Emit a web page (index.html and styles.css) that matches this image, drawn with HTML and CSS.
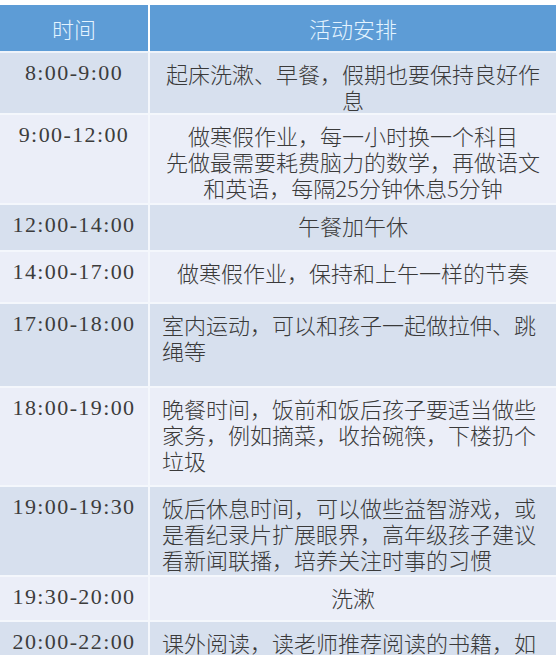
FILE: index.html
```html
<!DOCTYPE html>
<html lang="zh">
<head>
<meta charset="utf-8">
<title>寒假作息表</title>
<link rel="stylesheet" href="styles.css">
</head>
<body>
<table class="schedule">
  <colgroup><col class="col-time"><col class="col-act"></colgroup>
  <thead>
    <tr class="head"><th>时间</th><th>活动安排</th></tr>
  </thead>
  <tbody>
    <tr class="r1 dark"><td class="time">8:00-9:00</td><td class="act center">起床洗漱、早餐，假期也要保持良好作息</td></tr>
    <tr class="r2 light"><td class="time">9:00-12:00</td><td class="act center">做寒假作业，每一小时换一个科目<br>先做最需要耗费脑力的数学，再做语文和英语，每隔25分钟休息5分钟</td></tr>
    <tr class="r3 dark"><td class="time">12:00-14:00</td><td class="act center">午餐加午休</td></tr>
    <tr class="r4 light"><td class="time">14:00-17:00</td><td class="act center">做寒假作业，保持和上午一样的节奏</td></tr>
    <tr class="r5 dark"><td class="time">17:00-18:00</td><td class="act">室内运动，可以和孩子一起做拉伸、跳绳等</td></tr>
    <tr class="r6 light"><td class="time">18:00-19:00</td><td class="act">晚餐时间，饭前和饭后孩子要适当做些家务，例如摘菜，收拾碗筷，下楼扔个垃圾</td></tr>
    <tr class="r7 dark"><td class="time">19:00-19:30</td><td class="act">饭后休息时间，可以做些益智游戏，或是看纪录片扩展眼界，高年级孩子建议看新闻联播，培养关注时事的习惯</td></tr>
    <tr class="r8 light"><td class="time">19:30-20:00</td><td class="act center">洗漱</td></tr>
    <tr class="r9 dark"><td class="time">20:00-22:00</td><td class="act">课外阅读，读老师推荐阅读的书籍，如</td></tr>
  </tbody>
</table>
</body>
</html>
```
FILE: styles.css
```css
html, body {
  margin: 0;
  padding: 0;
  background: #ffffff;
  overflow: hidden;
}
body {
  padding-top: 5px;
  height: 650px;
}
.schedule {
  width: 556px;
  border-collapse: separate;
  border-spacing: 0;
  table-layout: fixed;
  font-family: "Noto Sans CJK SC", "Noto Sans", sans-serif;
}
.col-time { width: 150px; }
.col-act { width: 406px; }
.schedule th {
  background: #5d9cd6;
  color: #e3f3ff;
  font-weight: 300;
  font-size: 22px;
  height: 46px;
  padding: 0;
  border-right: 2px solid #ffffff;
  border-bottom: 2px solid #eef3fa;
  text-align: center;
  vertical-align: middle;
}
.schedule th:last-child { border-right: none; }
.schedule td {
  padding: 7px 12px 0;
  vertical-align: top;
  border-right: 2px solid #f4f7fc;
  border-bottom: 2px solid #f4f7fc;
  box-sizing: border-box;
}
.schedule td:last-child { border-right: none; }
.dark td { background: #d7e0ee; }
.light td { background: #ebeef8; }
.time {
  font-family: "Liberation Serif", "Times New Roman", serif;
  font-size: 22px;
  letter-spacing: 1.4px;
  color: #3c3c3c;
  text-align: center;
  line-height: 26px;
  white-space: nowrap;
  padding-left: 0 !important;
  padding-right: 0 !important;
}
.act {
  font-size: 22px;
  font-weight: 300;
  line-height: 26px;
  color: #3a3a3a;
  text-align: left;
}
.center { text-align: center; }
.r1 { height: 62px; }
.r2 { height: 90px; }
.r3 { height: 47px; }
.r4 { height: 52px; }
.r5 { height: 84px; }
.r6 { height: 99px; }
.r7 { height: 90px; }
.r8 { height: 45px; }
.r9 { height: 50px; }
```
